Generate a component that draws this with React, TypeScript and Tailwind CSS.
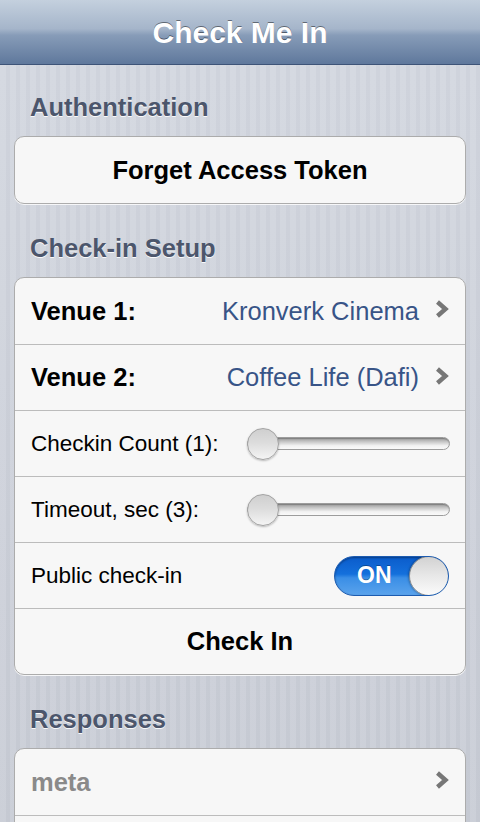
import React from "react";

const font = { fontFamily: '"Liberation Sans", Arial, Helvetica, sans-serif' };

function Chevron() {
  return (
    <svg width="16" height="22" viewBox="0 0 16 22" className="shrink-0 -mt-[4px]">
      <path d="M3.5 4 L11.5 11 L3.5 18" fill="none" stroke="#777777" strokeWidth="4.4" strokeLinejoin="miter" />
    </svg>
  );
}

function Slider() {
  return (
    <div className="relative w-[203px] h-[32px] flex items-center">
      <div className="w-full h-[13px] rounded-full border border-[#9c9c9c] bg-[linear-gradient(to_bottom,#9a9a9a_0%,#c8c8c8_35%,#f2f2f2_70%,#fafafa_100%)] shadow-[inset_0_1px_1px_rgba(0,0,0,0.2)]" />
      <div className="absolute left-0 top-0 w-[32px] h-[32px] rounded-full border border-[#a2a2a2] bg-[linear-gradient(to_bottom,#cfcfcf_0%,#dcdcdc_45%,#f4f4f4_100%)] shadow-[0_1px_2px_rgba(0,0,0,0.25)]" />
    </div>
  );
}

function Switch() {
  return (
    <div className="relative w-[115px] h-[40px] rounded-full border border-[#1c5bb0] overflow-hidden bg-[linear-gradient(to_bottom,#0b5ccb_0%,#1470dc_45%,#3a8ee6_55%,#5aa3ec_100%)] shadow-[inset_0_1px_2px_rgba(0,0,0,0.35)]">
      <span className="absolute left-[22px] top-0 h-full flex items-center text-white font-bold text-[23px] [text-shadow:0_-1px_0_rgba(0,0,0,0.3)]">ON</span>
      <div className="absolute right-[-1px] top-[-1px] w-[40px] h-[40px] rounded-full border border-[#8c8c8c] bg-[linear-gradient(to_bottom,#d2d2d2_0%,#e8e8e8_50%,#fbfbfb_100%)] shadow-[-1px_0_2px_rgba(0,0,0,0.25)]" />
    </div>
  );
}

function SectionHeader({ children, top }: { children: React.ReactNode; top: string }) {
  return (
    <div className={`${top} pb-[15px] px-[30px]`}>
      <div className="text-[25.5px] leading-[28px] font-bold text-[#4c566c] [text-shadow:0_1px_0_rgba(255,255,255,0.9)]">
        {children}
      </div>
    </div>
  );
}

export default function App() {
  return (
    <div
      style={font}
      className="w-[480px] h-[822px] overflow-hidden bg-[repeating-linear-gradient(to_right,rgba(255,255,255,0.07)_0px,rgba(255,255,255,0.07)_6px,rgba(0,0,0,0.015)_6px,rgba(0,0,0,0.015)_10px),linear-gradient(to_bottom,#d3d7e0,#c8ccd5)]"
    >
      <div className="h-[65px] flex items-center justify-center border-b border-[#3e5478] bg-[linear-gradient(to_bottom,#c4d0de_0%,#a5b5ca_45%,#879cb8_55%,#5f789c_100%)]">
        <span className="text-white font-bold text-[30px] [text-shadow:0_-1px_0_rgba(0,0,0,0.45)]">Check Me In</span>
      </div>

      <SectionHeader top="pt-[28px]">Authentication</SectionHeader>
      <div className="mx-[14px] rounded-[10px] border border-[#acacac] bg-[#f7f7f7] shadow-[0_1px_0_rgba(255,255,255,0.8)]">
        <div className="h-[66px] flex items-center justify-center text-[25.5px] font-bold text-black">Forget Access Token</div>
      </div>

      <SectionHeader top="pt-[30px]">Check-in Setup</SectionHeader>
      <div className="mx-[14px] rounded-[10px] border border-[#acacac] bg-[#f7f7f7] shadow-[0_1px_0_rgba(255,255,255,0.8)] overflow-hidden">
        <div className="h-[66px] flex items-center pl-[16px] pr-[15px]">
          <span className="text-[25.5px] font-bold text-black">Venue 1:</span>
          <span className="ml-auto text-[25.5px] text-[#385487] mr-[15px]">Kronverk Cinema</span>
          <Chevron />
        </div>
        <div className="h-[66px] flex items-center pl-[16px] pr-[15px] border-t border-[#bcbcbc]">
          <span className="text-[25.5px] font-bold text-black">Venue 2:</span>
          <span className="ml-auto text-[25.5px] text-[#385487] mr-[15px]">Coffee Life (Dafi)</span>
          <Chevron />
        </div>
        <div className="h-[66px] flex items-center justify-between pl-[16px] pr-[15px] border-t border-[#bcbcbc]">
          <span className="text-[22.5px] text-black">Checkin Count (1):</span>
          <Slider />
        </div>
        <div className="h-[66px] flex items-center justify-between pl-[16px] pr-[15px] border-t border-[#bcbcbc]">
          <span className="text-[22.5px] text-black">Timeout, sec (3):</span>
          <Slider />
        </div>
        <div className="h-[66px] flex items-center justify-between pl-[16px] pr-[16px] border-t border-[#bcbcbc]">
          <span className="text-[22.5px] text-black">Public check-in</span>
          <Switch />
        </div>
        <div className="h-[66px] flex items-center justify-center border-t border-[#bcbcbc]">
          <span className="text-[25.5px] font-bold text-black">Check In</span>
        </div>
      </div>

      <SectionHeader top="pt-[30px]">Responses</SectionHeader>
      <div className="mx-[14px] rounded-[10px] border border-[#acacac] bg-[#f7f7f7] overflow-hidden">
        <div className="h-[66px] flex items-center pl-[16px] pr-[15px]">
          <span className="text-[25.5px] font-bold text-[#8a8a8a]">meta</span>
          <span className="ml-auto" />
          <Chevron />
        </div>
        <div className="h-[66px] border-t border-[#bcbcbc]" />
      </div>
    </div>
  );
}
